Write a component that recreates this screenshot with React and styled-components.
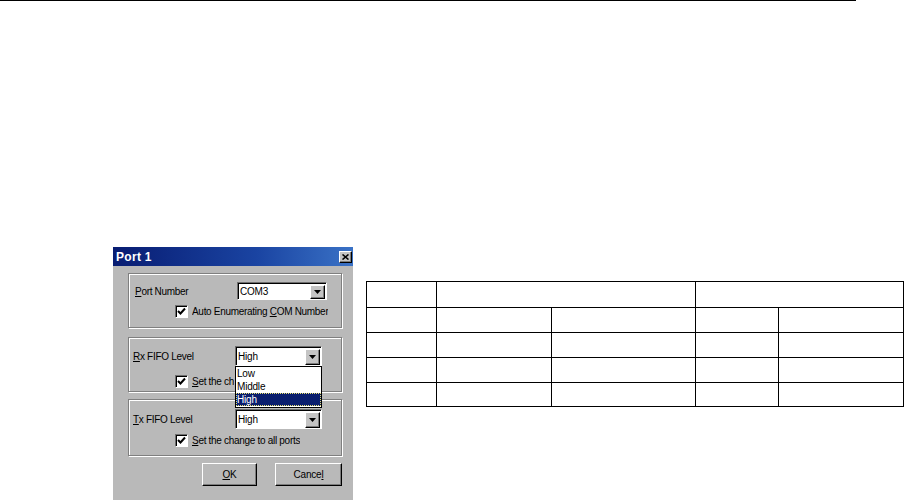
import React from "react";
import styled, { createGlobalStyle, css } from "styled-components";

const Global = createGlobalStyle`
  html, body { margin: 0; padding: 0; background: #fff; overflow: hidden; }
  #root { width: 904px; height: 500px; overflow: hidden; }
`;

const Page = styled.div`
  width: 904px;
  height: 500px;
  font-family: "Liberation Sans", Arial, sans-serif;
  color: #000;
`;

const TopRule = styled.div`
  width: 856px;
  height: 1px;
  background: #000;
`;

const Stage = styled.div`
  display: flex;
  align-items: flex-start;
  padding: 246px 0 0 113px;
`;

const Dialog = styled.div`
  width: 240px;
  background: #b9b9b9;
  display: flex;
  flex-direction: column;
  padding-bottom: 30px;
`;

const TitleBar = styled.div`
  height: 19px;
  display: flex;
  align-items: center;
  justify-content: space-between;
  padding: 0 1px 0 3px;
  background: linear-gradient(to right, #081c72 0%, #1a44a2 60%, #3a72c6 100%);
`;

const Title = styled.span`
  color: #fff;
  font-weight: bold;
  font-size: 12px;
  letter-spacing: 0.3px;
`;

const raised = css`
  border-top: 1px solid #fff;
  border-left: 1px solid #fff;
  border-right: 1px solid #000;
  border-bottom: 1px solid #000;
  box-shadow: inset -1px -1px 0 #7c7c7c;
`;

const CloseButton = styled.div`
  width: 13px;
  height: 12px;
  box-sizing: border-box;
  background: #c4c4c4;
  ${raised};
  display: flex;
  align-items: center;
  justify-content: center;
`;

const Body = styled.div`
  display: flex;
  flex-direction: column;
  padding: 0 11px 0 15px;
`;

const Group = styled.div`
  height: ${(p) => p.$h}px;
  margin-top: ${(p) => p.$mt}px;
  box-sizing: border-box;
  border: 1px solid #7f7f7f;
  box-shadow: inset 1px 1px 0 #fff, 1px 1px 0 #fff;
  display: flex;
  flex-direction: column;
  padding-left: ${(p) => p.$pl}px;
`;

const ComboRow = styled.div`
  display: flex;
  align-items: center;
  margin-top: ${(p) => p.$mt}px;
`;

const Label = styled.span`
  width: ${(p) => p.$w}px;
  font-size: 10px;
  letter-spacing: -0.3px;
`;

const U = styled.span`
  text-decoration: underline;
  text-underline-offset: 1px;
`;

const ComboWrap = styled.div`
  position: relative;
`;

const Combo = styled.div`
  width: ${(p) => p.$w}px;
  height: ${(p) => p.$h}px;
  box-sizing: border-box;
  background: #fff;
  border-top: 1px solid #6e6e6e;
  border-left: 1px solid #6e6e6e;
  border-right: 1px solid #fff;
  border-bottom: 1px solid #fff;
  box-shadow: inset 1px 1px 0 #000;
  display: flex;
  align-items: center;
  justify-content: space-between;
  padding: 1px 1px 0 2px;
  font-size: 10px;
  letter-spacing: -0.2px;
`;

const DropButton = styled.div`
  width: 15px;
  height: calc(100% - 1px);
  box-sizing: border-box;
  background: #c4c4c4;
  ${raised};
  display: flex;
  align-items: center;
  justify-content: center;
`;

const ListBox = styled.div`
  position: absolute;
  top: 100%;
  left: 0;
  width: 87px;
  box-sizing: border-box;
  background: #fff;
  border: 1px solid #000;
  z-index: 2;
  padding-bottom: 1px;
`;

const ListItem = styled.div`
  height: 13px;
  line-height: 13px;
  font-size: 10px;
  letter-spacing: -0.2px;
  padding-left: 1px;
  box-sizing: border-box;
  ${(p) =>
    p.$active &&
    css`
      background: #0a1e6e;
      color: #fff;
      outline: 1px dotted #e8e070;
      outline-offset: -1px;
    `}
`;

const CheckRow = styled.div`
  display: flex;
  align-items: center;
  gap: 4px;
  margin-top: ${(p) => p.$mt}px;
  padding-left: ${(p) => p.$pl}px;
  font-size: 10px;
  letter-spacing: -0.3px;
`;

const CheckText = styled.span`
  white-space: nowrap;
  overflow: hidden;
  ${(p) =>
    p.$clip &&
    css`
      max-width: ${p.$clip}px;
    `}
`;

const CheckBox = styled.div`
  width: 13px;
  height: 13px;
  box-sizing: border-box;
  background: #fff;
  border-top: 1px solid #6e6e6e;
  border-left: 1px solid #6e6e6e;
  border-right: 1px solid #fff;
  border-bottom: 1px solid #fff;
  box-shadow: inset 1px 1px 0 #000;
  display: flex;
  align-items: center;
  justify-content: center;
  flex: none;
`;

const ButtonRow = styled.div`
  display: flex;
  justify-content: flex-end;
  gap: 18px;
  margin-top: 7px;
`;

const Button = styled.div`
  width: ${(p) => p.$w}px;
  height: 23px;
  box-sizing: border-box;
  background: #b9b9b9;
  ${raised};
  display: flex;
  align-items: center;
  justify-content: center;
  font-size: 10px;
  letter-spacing: -0.2px;
`;

const TableWrap = styled.div`
  margin: 34px 0 0 13px;
`;

const Grid = styled.table`
  border-collapse: collapse;
  table-layout: fixed;
  width: 538px;
  td {
    border: 1px solid #000;
    padding: 0;
  }
`;

const Row = styled.tr`
  height: ${(p) => p.$h}px;
`;

const Arrow = () => (
  <svg width="7" height="4" viewBox="0 0 7 4">
    <path d="M0 0H7L3.5 4Z" fill="#000" />
  </svg>
);

const Check = () => (
  <svg width="9" height="9" viewBox="0 0 9 9">
    <path d="M1 4L3.5 6.5L8 1.5" fill="none" stroke="#000" strokeWidth="2" />
  </svg>
);

const XIcon = () => (
  <svg width="7" height="6" viewBox="0 0 7 6">
    <path d="M0.5 0.5L6.5 5.5M6.5 0.5L0.5 5.5" stroke="#000" strokeWidth="1.6" />
  </svg>
);

const ComboBox = ({ w, h, value, children }) => (
  <ComboWrap>
    <Combo $w={w} $h={h}>
      <span>{value}</span>
      <DropButton>
        <Arrow />
      </DropButton>
    </Combo>
    {children}
  </ComboWrap>
);

export default function App() {
  const cols = [70, 115, 144, 83, 125];
  return (
    <Page>
      <Global />
      <TopRule />
      <Stage>
        <Dialog>
          <TitleBar>
            <Title>Port 1</Title>
            <CloseButton>
              <XIcon />
            </CloseButton>
          </TitleBar>
          <Body>
            <Group $h={55} $mt={7} $pl={6}>
              <ComboRow $mt={8}>
                <Label $w={102}>
                  <U>P</U>ort Number
                </Label>
                <ComboBox w={90} h={18} value="COM3" />
              </ComboRow>
              <CheckRow $mt={5} $pl={40}>
                <CheckBox>
                  <Check />
                </CheckBox>
                <CheckText>
                  Auto Enumerating <U>C</U>OM Number
                </CheckText>
              </CheckRow>
            </Group>
            <Group $h={55} $mt={9} $pl={4}>
              <ComboRow $mt={8}>
                <Label $w={102}>
                  <U>R</U>x FIFO Level
                </Label>
                <ComboBox w={87} h={20} value="High">
                  <ListBox>
                    <ListItem>Low</ListItem>
                    <ListItem>Middle</ListItem>
                    <ListItem $active>High</ListItem>
                  </ListBox>
                </ComboBox>
              </ComboRow>
              <CheckRow $mt={9} $pl={42}>
                <CheckBox>
                  <Check />
                </CheckBox>
                <CheckText $clip={42}>
                  <U>S</U>et the change to all ports
                </CheckText>
              </CheckRow>
            </Group>
            <Group $h={57} $mt={7} $pl={4}>
              <ComboRow $mt={9}>
                <Label $w={102}>
                  <U>T</U>x FIFO Level
                </Label>
                <ComboBox w={87} h={20} value="High" />
              </ComboRow>
              <CheckRow $mt={5} $pl={42}>
                <CheckBox>
                  <Check />
                </CheckBox>
                <CheckText>
                  <U>S</U>et the change to all ports
                </CheckText>
              </CheckRow>
            </Group>
            <ButtonRow>
              <Button $w={55}>
                <span>
                  <U>O</U>K
                </span>
              </Button>
              <Button $w={67}>
                <span>
                  Cance<U>l</U>
                </span>
              </Button>
            </ButtonRow>
          </Body>
        </Dialog>
        <TableWrap>
          <Grid>
            <colgroup>
              {cols.map((w, i) => (
                <col key={i} style={{ width: w }} />
              ))}
            </colgroup>
            <tbody>
              <Row $h={26}>
                <td />
                <td colSpan={2} />
                <td colSpan={2} />
              </Row>
              {[25, 25, 25, 24].map((h, r) => (
                <Row key={r} $h={h}>
                  {cols.map((_, c) => (
                    <td key={c} />
                  ))}
                </Row>
              ))}
            </tbody>
          </Grid>
        </TableWrap>
      </Stage>
    </Page>
  );
}
